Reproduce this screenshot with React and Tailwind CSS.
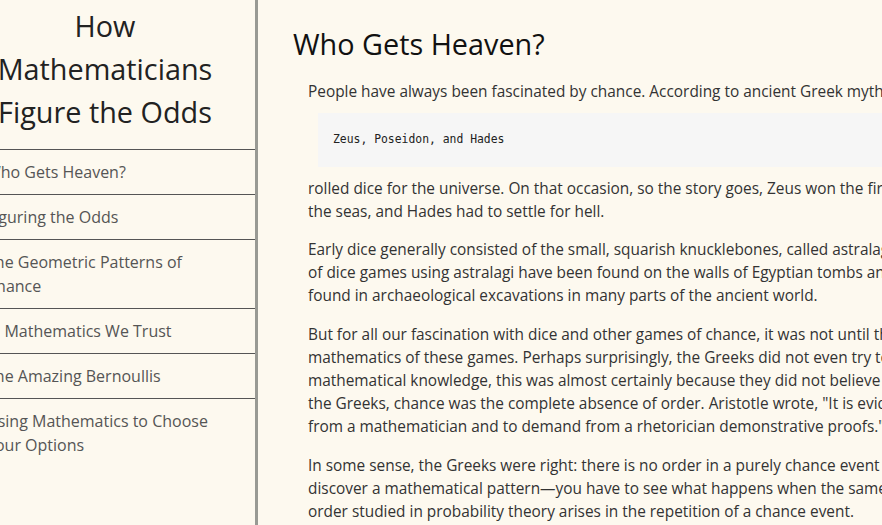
import React from "react";

const chapters = [
  "Who Gets Heaven?",
  "Figuring the Odds",
  "The Geometric Patterns of Chance",
  "In Mathematics We Trust",
  "The Amazing Bernoullis",
  "Using Mathematics to Choose Your Options",
];

const Sidebar = () => {
  return (
    <aside className="-ml-[45px] h-full w-[303px] shrink-0 border-r-[3px] border-[#999a94]">
      <h1 className="px-[30px] pt-[4px] pb-[15px] text-center text-[28.8px] leading-[1.5] font-normal text-[#222]">
        How Mathematicians Figure the Odds
      </h1>
      <nav>
        <ul>
          {chapters.map((title) => (
            <li
              key={title}
              className="border-t border-[#555] px-[31px] py-[10px] text-[16px] leading-[24px] text-[#555]"
            >
              {title}
            </li>
          ))}
        </ul>
      </nav>
    </aside>
  );
};

const App = () => {
  return (
    <div className="flex h-screen overflow-hidden bg-[#fdf9ef] font-['Open_Sans',sans-serif]">
      <Sidebar />
      <main className="min-w-0 flex-1 overflow-hidden pl-[35px]">
        <div className="w-[1200px]">
          <h2 className="mt-[26.5px] text-[28.8px] leading-[1.2] font-normal text-[#111]">
            Who Gets Heaven?
          </h2>
          <div className="mt-[19px] pl-[15px] text-[15.4px] leading-[23.1px] text-[#333]">
            <p>
              People have always been fascinated by chance. According to ancient Greek mythology, the three brothers
            </p>
            <pre className="mt-[10px] mb-[10px] ml-[10px] bg-[#f6f6f6] py-[18px] pl-[15px] font-['DejaVu_Sans_Mono',monospace] text-[11.4px] leading-[17.4px] text-[#222]">
              Zeus, Poseidon, and Hades
            </pre>
            <p>
              rolled dice for the universe. On that occasion, so the story goes, Zeus won the first prize, the heavens, Poseidon won second prize,
              <br />
              the seas, and Hades had to settle for hell.
            </p>
            <p className="mt-[15.4px]">
              Early dice generally consisted of the small, squarish knucklebones, called astralagi, of sheep or deer. Drawings
              <br />
              of dice games using astralagi have been found on the walls of Egyptian tombs and on Greek vases, and polished ones have been
              <br />
              found in archaeological excavations in many parts of the ancient world.
            </p>
            <p className="mt-[15.4px]">
              But for all our fascination with dice and other games of chance, it was not until the seventeenth century that anyone worked out the
              <br />
              mathematics of these games. Perhaps surprisingly, the Greeks did not even try to do so. Given their high regard for
              <br />
              mathematical knowledge, this was almost certainly because they did not believe there was any order in chance. For
              <br />
              the Greeks, chance was the complete absence of order. Aristotle wrote, "It is evident that it is equally foolish to accept probable reasoning
              <br />
              from a mathematician and to demand from a rhetorician demonstrative proofs."
            </p>
            <p className="mt-[15.4px]">
              In some sense, the Greeks were right: there is no order in a purely chance event taken individually. To
              <br />
              discover a mathematical pattern—you have to see what happens when the same event is repeated many times. The
              <br />
              order studied in probability theory arises in the repetition of a chance event.
            </p>
          </div>
        </div>
      </main>
    </div>
  );
};

export default App;
